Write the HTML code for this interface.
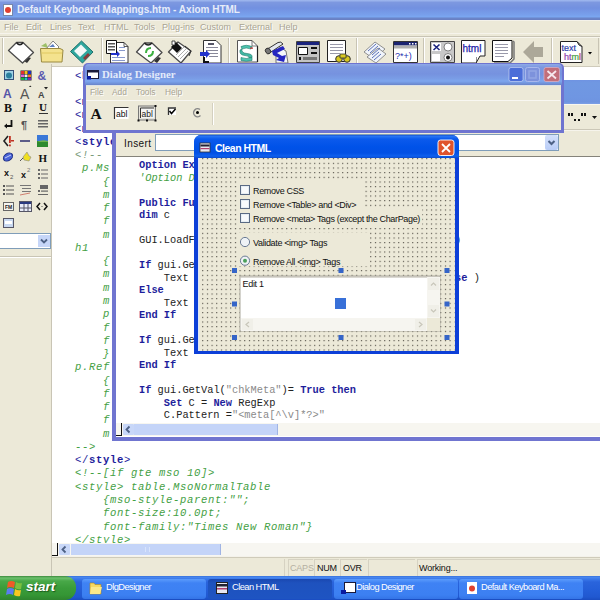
<!DOCTYPE html>
<html><head><meta charset="utf-8">
<style>
*{margin:0;padding:0;box-sizing:border-box}
html,body{width:600px;height:600px;overflow:hidden;background:#ECE9D8;font-family:"Liberation Sans",sans-serif;position:relative}
.a{position:absolute}
.mono{font-family:"Liberation Mono",monospace;white-space:pre}
.menu span{position:absolute;top:0;color:#A8A493;text-shadow:1px 1px 0 #fff}
.code div{position:absolute;left:0;height:14px;white-space:pre}
.b{color:#1E1E9C;font-weight:bold}
.t{color:#1E1E9C}
.g{color:#44A044;font-style:italic}
.gr{color:#8a8a8a}
.k{color:#222}
</style></head><body>

<!-- main title bar -->
<div class="a" style="left:0;top:0;width:600px;height:20px;background:linear-gradient(#A2BAF0 0,#7D98E0 2.5px,#7290E0 8px,#78A0EC 15px,#7AA6F0 16.5px,#6A84C8 18.5px,#6A7EC0 20px)"></div>
<div class="a" style="left:3px;top:4px;width:10px;height:12px;background:#fff;border:1px solid #7788aa"></div>
<div class="a" style="left:5px;top:7px;width:6px;height:6px;border-radius:50%;background:#E04030"></div>
<div class="a" style="left:17px;top:4px;font-size:10px;font-weight:bold;color:#E6ECF9;white-space:nowrap">Default Keyboard Mappings.htm - Axiom HTML</div>
<div class="a" style="left:0;top:20px;width:600px;height:1px;background:#F4F2EA"></div>

<!-- menu -->
<div class="a menu" style="left:0;top:22px;width:600px;height:12px;font-size:9px">
<span style="left:4px">File</span><span style="left:26px">Edit</span><span style="left:50px">Lines</span><span style="left:78px">Text</span><span style="left:104px">HTML</span><span style="left:134px">Tools</span><span style="left:162px">Plug-ins</span><span style="left:200px">Custom</span><span style="left:239px">External</span><span style="left:279px">Help</span>
</div>
<div class="a" style="left:0;top:33px;width:600px;height:1px;background:#F6F4EC"></div>
<div class="a" style="left:0;top:36px;width:600px;height:1px;background:#C8C4B4"></div>
<div class="a" style="left:0;top:37px;width:600px;height:1px;background:#F8F6EE"></div>

<!-- toolbar -->
<svg class="a" style="left:0;top:0" width="600" height="66" viewBox="0 0 600 66">
<g stroke-linejoin="round">
<!-- separators -->
<g fill="#C8C4B4"><rect x="2" y="38" width="1" height="26"/><rect x="101" y="38" width="1" height="26"/><rect x="228" y="38" width="1" height="26"/><rect x="356" y="38" width="1" height="26"/><rect x="423" y="38" width="1" height="26"/><rect x="551" y="38" width="1" height="26"/><rect x="598" y="38" width="1" height="26"/></g>
<g fill="#fff"><rect x="3" y="38" width="1" height="26"/><rect x="102" y="38" width="1" height="26"/><rect x="229" y="38" width="1" height="26"/><rect x="357" y="38" width="1" height="26"/><rect x="424" y="38" width="1" height="26"/><rect x="552" y="38" width="1" height="26"/></g>
<!-- 1 new -->
<path d="M24 61 L28 57 L31 58 L27 63Z" fill="#333"/>
<path d="M8.5 50.5 L16.5 42.5 L23 42.5 L33.5 52.5 L22.5 63 Z" fill="#fff" stroke="#4a4a4a" stroke-width="1.3"/>
<path d="M16.5 42.5 Q20 47 23 42.5" fill="none" stroke="#222" stroke-width="1.6"/>
<!-- 2 open -->
<path d="M41 46 L46 43 L48 48 Z" fill="#9DC068"/>
<path d="M46 49 L53 41 L59 47 L52 54Z" fill="#fff" stroke="#666" stroke-width="0.8"/>
<path d="M49 47 L53 44 L55 47 Z" fill="#5C7FC0"/>
<path d="M40.5 48.5 L60 48.5 L63 50 L62 62 L41.5 62 Z" fill="#F4E28E" stroke="#9A8A40" stroke-width="1"/>
<path d="M41.5 53 L62 53" stroke="#E0C860" stroke-width="1"/>
<!-- 3 save -->
<path d="M70.5 51.5 L81.5 41 L93 52 L82.5 63 Z" fill="#2FA79E" stroke="#1F6F6A" stroke-width="1"/>
<path d="M74 51 L81 44.5 L87 50.5 L80 57 Z" fill="#F4F8F8"/>
<path d="M83 58 L88 53 L90 55 L85 60Z" fill="#8A3A3A"/>
<!-- 4 pages arrow -->
<path d="M110.5 42.5 L124 42.5 L128 46.5 L128 63 L110.5 63 Z" fill="#fff" stroke="#333" stroke-width="1"/>
<path d="M124 42.5 L124 46.5 L128 46.5" fill="none" stroke="#333" stroke-width="0.8"/>
<rect x="106.5" y="40.5" width="10" height="13" fill="#fff" stroke="#111" stroke-width="1"/>
<g fill="#555"><rect x="108" y="43" width="7" height="1.5"/><rect x="108" y="46" width="7" height="1.5"/><rect x="108" y="49" width="7" height="1.5"/></g>
<g fill="#8899CC"><rect x="119" y="47" width="6" height="1"/><rect x="119" y="50" width="6" height="1"/><rect x="112" y="57" width="13" height="1"/><rect x="112" y="60" width="13" height="1"/></g>
<path d="M111 53 L117 53 L117 51 L120 54 L117 57 L117 55 L111 55Z" fill="#2233CC"/>
<!-- 5 refresh diamond -->
<path d="M154 61 L158 57 L161 58 L157 63Z" fill="#333"/>
<path d="M136.5 52 L144.5 43 L152 43 L162 52.5 L151 63 Z" fill="#fff" stroke="#4a4a4a" stroke-width="1.3"/>
<path d="M144.5 43 Q148 47 152 43" fill="none" stroke="#222" stroke-width="1.5"/>
<path d="M146 53 Q146 48 151 48" fill="none" stroke="#3CB040" stroke-width="2"/>
<path d="M153 51 Q153 56 148 56" fill="none" stroke="#3CB040" stroke-width="2"/>
<!-- 6 clip diamond -->
<path d="M168.5 52 L178 42 L191 51 L181 63 Z" fill="#fff" stroke="#4a4a4a" stroke-width="1.3"/>
<path d="M185 46 L191 51 L189 56" fill="none" stroke="#333" stroke-width="1"/>
<g stroke="#999" stroke-width="0.8"><path d="M176 55 L184 47"/><path d="M178 57 L186 49"/><path d="M180 59 L188 51"/></g>
<path d="M171 47 L176 42 L182 48 L177 53Z" fill="#111"/>
<rect x="172" y="41" width="3" height="4" fill="#fff" stroke="#222" stroke-width="0.8"/>
<!-- 7 doc arrow -->
<path d="M203.5 40.5 L216 40.5 L221 45.5 L221 63 L203.5 63 Z" fill="#fff" stroke="#333" stroke-width="1"/>
<path d="M208 43 L214 43 L214 45 L208 45Z" fill="#556"/>
<g fill="#889"><rect x="206" y="47" width="12" height="1"/><rect x="206" y="50" width="12" height="1"/><rect x="209" y="53" width="9" height="1"/><rect x="209" y="56" width="9" height="1"/></g>
<path d="M200 52 L206 52 L206 50 L210 54 L206 58 L206 56 L200 56Z" fill="#2233CC"/>
<path d="M203 57 L203 63 L209 63 L209 61 L205 61 L205 57Z" fill="#111"/>
<!-- 8 doc S -->
<path d="M237.5 40.5 L252 40.5 L257.5 46 L257.5 62 L237.5 62 Z" fill="#fff" stroke="#555" stroke-width="1"/>
<path d="M257.5 46 L257.5 62" stroke="#222" stroke-width="1.2"/>
<path d="M252 40.5 L252 46 L257.5 46" fill="none" stroke="#555" stroke-width="0.8"/>
<path d="M241 46.5 Q246 44 252 46.5 L251 49 Q246 47 242 49 Z" fill="#4EC4B0" stroke="#1E7A6A" stroke-width="0.6"/>
<path d="M242 49 Q241 53 247 53.5 Q253 54 252 57.5 L249 58 Q250 56 245 55.5 Q239 55 240 50Z" fill="#40B8A4" stroke="#1E7A6A" stroke-width="0.6"/>
<path d="M241 57.5 Q246 59.5 252 57.5 L252 60.5 Q246 62 241 60.5 Z" fill="#4EC4B0" stroke="#1E7A6A" stroke-width="0.6"/>
<rect x="250" y="47.5" width="3" height="1.2" fill="#C03030"/>
<!-- 9 scroll arrow -->
<path d="M276 45 L286 51 L288 63 L276 63Z" fill="#F4F6FA" stroke="#555" stroke-width="0.8"/>
<path d="M266 50 L278 42.5 Q281 41 283 44 L271 52 Q268 54 266 50Z" fill="#E4E8EE" stroke="#333" stroke-width="1"/>
<ellipse cx="268" cy="51" rx="2.5" ry="3" fill="#777" stroke="#222" stroke-width="0.8" transform="rotate(-35 268 51)"/>
<path d="M272 51 L283 46 L285 49 L277 53 L282 56 L286 55 L284 62 L276 60 L279 58 L273 55Z" fill="#2626C0"/>
<!-- 10 window form -->
<rect x="296.5" y="41.5" width="23" height="21" fill="#C4C4C4" stroke="#444" stroke-width="1"/>
<rect x="297" y="42" width="22" height="3" fill="#1A237E"/>
<rect x="298.5" y="47.5" width="9" height="7" fill="#fff" stroke="#111" stroke-width="1"/>
<rect x="311" y="47" width="6" height="2" fill="#111"/><rect x="311" y="52" width="6" height="2" fill="#111"/>
<rect x="299" y="57" width="2" height="3" fill="#111"/><rect x="303" y="57" width="14" height="3" fill="#777"/>
<!-- 11 doc binoculars -->
<rect x="327.5" y="40.5" width="18" height="21" fill="#fff" stroke="#222" stroke-width="1"/>
<g fill="#99A"><rect x="330" y="44" width="13" height="1"/><rect x="330" y="47" width="13" height="1"/><rect x="330" y="50" width="13" height="1"/><rect x="330" y="53" width="10" height="1"/></g>
<circle cx="339" cy="59" r="3.3" fill="#D8C820" stroke="#333" stroke-width="1"/><circle cx="347" cy="59" r="3.3" fill="#D8C820" stroke="#333" stroke-width="1"/>
<rect x="340" y="54" width="6" height="4" fill="#D8C820" stroke="#333" stroke-width="0.8"/>
<!-- 12 two sheets -->
<path d="M364 52 L375 42 L385 49 L374 59Z" fill="#F0F4FA" stroke="#777" stroke-width="0.8"/>
<path d="M367 57 L378 48 L386 54 L376 63Z" fill="#F0F4FA" stroke="#777" stroke-width="0.8"/>
<g stroke="#4B62B0" stroke-width="0.9"><path d="M368 51 L376 44"/><path d="M370 53 L378 46"/><path d="M372 55 L380 48"/><path d="M372 58 L379 52"/><path d="M374 60 L381 54"/></g>
<!-- 13 regex window -->
<rect x="393.5" y="41.5" width="24" height="21" fill="#fff" stroke="#333" stroke-width="1"/>
<rect x="394" y="42" width="23" height="3.5" fill="#1A2370"/>
<rect x="394" y="45.5" width="23" height="3" fill="#B0B0B0"/>
<g fill="#fff"><rect x="409" y="43" width="1.5" height="1.5"/><rect x="412" y="43" width="1.5" height="1.5"/><rect x="415" y="43" width="1.5" height="1.5"/></g>
<text x="395" y="59" font-family="Liberation Sans" font-size="9" fill="#2630B0">?*+)</text>
<!-- 14 checkbox radio -->
<rect x="430.5" y="41.5" width="24" height="21" fill="#C8C8C8" stroke="#444" stroke-width="1"/>
<rect x="432" y="43" width="9" height="8" fill="#fff"/>
<path d="M433.5 44.5 L439.5 50 M439.5 44.5 L433.5 50" stroke="#1A237E" stroke-width="1.6"/>
<circle cx="448" cy="47" r="4" fill="#fff" stroke="#666" stroke-width="0.8"/>
<rect x="432" y="54" width="8" height="7" fill="#fff"/>
<circle cx="448" cy="57.5" r="4" fill="#fff" stroke="#666" stroke-width="0.8"/>
<circle cx="448" cy="57.5" r="2" fill="#111"/>
<!-- 15 html page -->
<path d="M461.5 40.5 L485 40.5 L485 56 L480 56 L476 63 L476 57 L461.5 57 L461.5 63" fill="#fff" stroke="#222" stroke-width="1"/>
<rect x="462" y="56" width="14" height="7" fill="#fff"/>
<path d="M461.5 40.5 L461.5 63 L476 63" fill="none" stroke="#222" stroke-width="1"/>
<text x="462.5" y="51.5" font-family="Liberation Sans" font-size="10" fill="#1E22A8" stroke="#1E22A8" stroke-width="0.25">html</text>
<!-- 16 page lines -->
<path d="M492.5 40.5 L512 40.5 L512 58 L508 61.5 L492.5 61.5Z" fill="#fff" stroke="#111" stroke-width="1"/>
<path d="M513 41 L514 42 L514 59 L510 63 L494 63" fill="none" stroke="#777" stroke-width="1.5"/>
<g fill="#99A"><rect x="495" y="44" width="13" height="1"/><rect x="495" y="47" width="13" height="1"/><rect x="495" y="50" width="13" height="1"/><rect x="495" y="53" width="13" height="1"/><rect x="495" y="56" width="9" height="1"/></g>
<!-- 17 gray arrow -->
<path d="M523 52 L534 41 L534 47 L543 47 L543 57 L534 57 L534 63 Z" fill="#ACA899"/>
<!-- 18 text html -->
<path d="M560.5 41.5 L577 41.5 L582 46.5 L582 62.5 L560.5 62.5 Z" fill="#fff" stroke="#222" stroke-width="1"/>
<path d="M577 41.5 L579 45 L582 46.5" fill="none" stroke="#222" stroke-width="1"/>
<text x="561.5" y="50.5" font-family="Liberation Sans" font-size="9" fill="#2A3AA8" stroke="#2A3AA8" stroke-width="0.2">text</text>
<text x="564" y="60" font-family="Liberation Sans" font-size="9" fill="#9040B0" stroke="#9040B0" stroke-width="0.2">ht<tspan fill="#40A040" stroke="#40A040">m</tspan><tspan fill="#C04040" stroke="#C04040">l</tspan></text>
<path d="M588 52 L592 52 L590 54.5Z" fill="#000"/>
</g>
</svg>

<!-- left panel -->
<svg class="a" style="left:0;top:64px" width="52" height="200" viewBox="0 64 52 200">
<!-- row1 -->
<rect x="4.5" y="70.5" width="9" height="9" fill="#9FD2E6" stroke="#35507A" stroke-width="1"/>
<circle cx="9" cy="75.5" r="3" fill="#2B7F9E"/>
<rect x="20.5" y="70.5" width="11" height="10" fill="#222"/>
<g><rect x="21" y="71" width="3" height="3" fill="#E03030"/><rect x="24.5" y="71" width="3" height="3" fill="#F0C020"/><rect x="28" y="71" width="3" height="3" fill="#2030C0"/><rect x="21" y="74.5" width="3" height="2.5" fill="#E060E0"/><rect x="24.5" y="74.5" width="3" height="2.5" fill="#F0F0F0"/><rect x="28" y="74.5" width="3" height="2.5" fill="#F08020"/><rect x="21" y="77.5" width="3" height="2.5" fill="#20B040"/><rect x="24.5" y="77.5" width="3" height="2.5" fill="#20C0C0"/><rect x="28" y="77.5" width="3" height="2.5" fill="#8020C0"/></g>
<text x="37.5" y="80" font-family="Liberation Sans" font-weight="bold" font-size="12" fill="#5A5AB0">&amp;</text>
<!-- row2 -->
<text x="3" y="98" font-family="Liberation Sans" font-weight="bold" font-size="12" fill="#5555A8">A</text>
<text x="20" y="99" font-family="Liberation Sans" font-size="14" fill="#555">A</text>
<path d="M29 87 L31.5 87 L30.2 85.5Z" fill="#222"/>
<text x="38" y="98" font-family="Liberation Sans" font-weight="bold" font-size="9" fill="#444">A</text>
<path d="M44 87 L48 87 L46 89.5Z" fill="#222"/>
<!-- row3 -->
<text x="4" y="112" font-family="Liberation Serif" font-weight="bold" font-size="12" fill="#111">B</text>
<text x="22" y="112" font-family="Liberation Serif" font-weight="bold" font-style="italic" font-size="12" fill="#111">I</text>
<text x="39" y="111" font-family="Liberation Serif" font-weight="bold" font-size="11" fill="#111">U</text>
<rect x="39" y="113" width="9" height="1" fill="#333"/>
<!-- row4 -->
<path d="M11.5 120 L11.5 126 L6 126" fill="none" stroke="#111" stroke-width="1.8"/>
<path d="M4 126 L7 123.5 L7 128.5Z" fill="#111"/>
<text x="21" y="129" font-family="Liberation Sans" font-weight="bold" font-size="11" fill="#555">¶</text>
<g fill="#666"><rect x="38" y="120" width="10" height="1.5"/><rect x="38" y="123" width="10" height="1.5"/><rect x="38" y="126" width="10" height="1.5"/></g>
<!-- row5 -->
<path d="M8 136 L4 141 L8 146" fill="none" stroke="#222" stroke-width="1.6"/>
<rect x="9" y="136" width="1.8" height="7" fill="#C03020"/><rect x="9" y="144.5" width="1.8" height="1.8" fill="#C03020"/>
<rect x="11" y="140" width="3" height="1.5" fill="#C03020"/>
<rect x="20" y="140" width="10" height="2" fill="#5C5C88"/>
<rect x="37" y="135" width="11" height="12" fill="#3A78D8"/>
<rect x="37" y="141" width="11" height="6" fill="#2E8A2E"/>
<path d="M37 142 Q42 139 48 141 L48 142 L37 142Z" fill="#6CB04C"/>
<!-- row6 -->
<ellipse cx="8" cy="157" rx="5" ry="3.6" transform="rotate(-35 8 157)" fill="#4A64D8" stroke="#1A2A80" stroke-width="1"/>
<path d="M5 158 L11 155" stroke="#C8D0F8" stroke-width="1"/>
<path d="M20 161 L24 157" stroke="#555" stroke-width="1"/>
<path d="M23 157 L27 152 L29 156 L31 157 L29 161 L24 160Z" fill="#F0E020" stroke="#888" stroke-width="0.6"/>
<text x="38.5" y="161.5" font-family="Liberation Serif" font-weight="bold" font-size="11" fill="#111">H</text>
<!-- row7 -->
<text x="4" y="176" font-family="Liberation Sans" font-weight="bold" font-size="9" fill="#111">x</text>
<text x="10" y="179" font-family="Liberation Sans" font-size="6" fill="#555">2</text>
<text x="21" y="178" font-family="Liberation Sans" font-weight="bold" font-size="9" fill="#111">x</text>
<text x="27" y="172" font-family="Liberation Sans" font-size="6" fill="#777">2</text>
<g fill="#666"><rect x="38" y="169" width="2" height="2"/><rect x="38" y="173" width="2" height="2"/><rect x="38" y="177" width="2" height="2"/><rect x="41" y="169.5" width="7" height="1"/><rect x="41" y="173.5" width="7" height="1"/><rect x="41" y="177.5" width="7" height="1"/></g>
<!-- row8 -->
<g fill="#555"><rect x="3" y="185" width="2" height="2"/><rect x="3" y="189" width="2" height="2"/><rect x="3" y="193" width="2" height="2"/><rect x="6" y="185.5" width="8" height="1"/><rect x="6" y="189.5" width="8" height="1"/><rect x="6" y="193.5" width="8" height="1"/></g>
<g fill="#777"><rect x="20" y="185" width="11" height="1"/><rect x="22" y="188" width="9" height="1"/><rect x="22" y="191" width="9" height="1"/></g>
<path d="M20 195 L30 193" stroke="#D08070" stroke-width="1"/>
<g fill="#666"><rect x="40" y="185" width="8" height="4"/><rect x="38" y="190" width="2" height="2"/><rect x="41" y="190.5" width="7" height="1.2"/><rect x="38" y="194" width="10" height="1"/></g>
<!-- row9 -->
<rect x="3.5" y="202.5" width="10" height="8" fill="#F4F4F0" stroke="#666" stroke-width="1"/>
<text x="5" y="209" font-family="Liberation Sans" font-weight="bold" font-size="5" fill="#222">FM</text>
<rect x="19.5" y="201.5" width="12" height="10" fill="#E8ECF8" stroke="#556" stroke-width="1"/>
<rect x="20" y="202" width="11" height="2" fill="#2A3A80"/>
<g fill="#556"><rect x="23.5" y="204" width="1" height="7"/><rect x="27.5" y="204" width="1" height="7"/><rect x="20" y="207.5" width="11" height="1"/></g>
<path d="M40 203 L37 206.5 L40 210 M44 203 L47 206.5 L44 210" fill="none" stroke="#111" stroke-width="1.5"/>
<rect x="41.5" y="206" width="1" height="1" fill="#555"/>
<!-- row10 -->
<rect x="3.5" y="218.5" width="10" height="9" fill="#C8D8F0" stroke="#556" stroke-width="1"/>
<rect x="5" y="221" width="7" height="3" fill="#fff"/>
<!-- combobox -->
<rect x="0" y="233" width="51" height="16" fill="#7F9DB9"/>
<rect x="0" y="234" width="50" height="14" fill="#fff"/>
<rect x="38" y="235" width="12" height="12" fill="#C6D6F8"/>
<path d="M41 239.5 L44 242.5 L47 239.5" fill="none" stroke="#4D6185" stroke-width="1.8"/>
<rect x="0" y="256" width="51" height="1" fill="#C9C5B5"/>
<rect x="0" y="257" width="51" height="1" fill="#fff"/>
</svg>

<!-- left panel border -->
<div class="a" style="left:51px;top:64px;width:1px;height:512px;background:#C9C5B5"></div>

<!-- main editor -->
<div class="a" style="left:52px;top:66px;width:548px;height:1px;background:#CFCBBB"></div>
<div class="a" style="left:52px;top:67px;width:548px;height:476px;background:#fff"></div>

<div class="a mono" id="oc" style="left:75px;top:69.5px;font-size:10.6px;letter-spacing:0.64px;line-height:13.27px;color:#222"><span class="t">&lt;</span><span class="b">html</span><span class="t">&gt;</span>

<span class="t">&lt;</span><span class="b">meta</span> name=<span class="gr">"Content-Type"</span>
<span class="t">&lt;</span><span class="b">meta</span> name=<span class="gr">"ProgId"</span>
<span class="t">&lt;</span><span class="b">meta</span> name=<span class="gr">"Generator"</span>
<span class="t">&lt;</span><span class="b">style</span><span class="t">&gt;</span>
<span class="g" style="color:#7a9a7a">&lt;!--</span>
<span class="g"> p.Ms</span>
<span class="g">    {</span>
<span class="g">    m</span>
<span class="g">    f</span>
<span class="g">    f</span>
<span class="g">    m</span>
<span class="g">h1</span>
<span class="g">    {</span>
<span class="g">    m</span>
<span class="g">    m</span>
<span class="g">    m</span>
<span class="g">    p</span>
<span class="g">    f</span>
<span class="g">    f</span>
<span class="g">    }</span>
<span class="g">p.Ref</span>
<span class="g">    {</span>
<span class="g">    f</span>
<span class="g">    f</span>
<span class="g">    f</span>
<span class="g">    m</span>
<span class="g">--&gt;</span>
<span class="t">&lt;/</span><span class="b">style</span><span class="t">&gt;</span>
<span class="g">&lt;!--[if gte mso 10]&gt;</span>
<span class="g">&lt;style&gt; table.MsoNormalTable</span>
<span class="g">    {mso-style-parent:"";</span>
<span class="g">    font-size:10.0pt;</span>
<span class="g">    font-family:"Times New Roman"}</span>
<span class="g">&lt;/style&gt;</span>
</div>

<!-- main scrollbar -->
<div class="a" style="left:52px;top:543px;width:548px;height:13px;background:#F7F6F1"></div>
<div class="a" style="left:52px;top:555px;width:6px;height:1px;background:#111"></div>
<div class="a" style="left:57px;top:543px;width:1px;height:13px;background:#111"></div>
<div class="a" style="left:59px;top:544px;width:11px;height:11px;background:#C8D7F8;border-radius:1px"></div>
<svg class="a" style="left:59px;top:544px" width="11" height="11"><path d="M6.5 2.5 L3.5 5.5 L6.5 8.5" fill="none" stroke="#4D6185" stroke-width="1.8"/></svg>
<div class="a" style="left:71px;top:544px;width:150px;height:11px;background:#C4D4F8;border-right:1px solid #A0B4E4"></div>
<div class="a" style="left:145px;top:547px;width:5px;height:5px;border-left:1px solid #D8E4FC;border-right:1px solid #D8E4FC"></div>

<!-- status bar -->
<div class="a" style="left:52px;top:556px;width:548px;height:2px;background:#F4F2EA"></div>
<div class="a" style="left:52px;top:558px;width:548px;height:18px;background:#ECE9D8"></div>
<div class="a" style="left:52px;top:557px;width:548px;height:1px;background:#CFCBBA"></div>
<div class="a" style="left:284px;top:559px;width:1px;height:17px;background:#D6D2C2"></div>
<div class="a" style="left:288px;top:559px;width:25px;height:17px;border-left:1px solid #D6D2C2;border-top:1px solid #D6D2C2"></div>
<div class="a" style="left:314px;top:559px;width:25px;height:17px;border-left:1px solid #D6D2C2;border-top:1px solid #D6D2C2"></div>
<div class="a" style="left:340px;top:559px;width:27px;height:17px;border-left:1px solid #D6D2C2;border-top:1px solid #D6D2C2"></div>
<div class="a" style="left:368px;top:559px;width:47px;height:17px;border-left:1px solid #D6D2C2;border-top:1px solid #D6D2C2"></div>
<div class="a" style="left:417px;top:559px;width:183px;height:17px;border-left:1px solid #D6D2C2;border-top:1px solid #D6D2C2"></div>
<div class="a" style="left:290px;top:563px;font-size:9px;color:#B4B0A2;letter-spacing:-0.2px">CAPS</div>
<div class="a" style="left:317px;top:563px;font-size:9px;color:#111;letter-spacing:-0.2px">NUM</div>
<div class="a" style="left:343px;top:563px;font-size:9px;color:#111;letter-spacing:-0.2px">OVR</div>
<div class="a" style="left:419px;top:563px;font-size:9px;color:#111;letter-spacing:-0.2px">Working...</div>

<!-- taskbar -->
<div class="a" style="left:0;top:576px;width:600px;height:24px;background:linear-gradient(#3168D5 0,#4A8AF0 1px,#3A78EA 3px,#2A64DC 6px,#245ED8 14px,#2058D0 21px,#1A4CC0 24px)"></div>
<div class="a" style="left:0;top:576px;width:76px;height:24px;background:linear-gradient(#3C8A3C 0,#6CC06C 2px,#48A848 5px,#3A9C3A 12px,#359635 19px,#2E842E 24px);border-radius:0 11px 11px 0"></div>
<svg class="a" style="left:0;top:576px" width="80" height="24" viewBox="0 576 80 24">
<path d="M8 582 Q11 580 15 582 L14 588 Q10 586 7 588Z" fill="#F05A28"/>
<path d="M16 582 Q19 584 22 583 L21 589 Q18 590 15 588Z" fill="#7CC040"/>
<path d="M7 589 Q10 587 14 589 L13 595 Q10 593 6 595Z" fill="#5A7CF0"/>
<path d="M15 589 Q18 591 21 590 L20 596 Q17 597 14 595Z" fill="#F8C820"/>
</svg>
<div class="a" style="left:26px;top:579px;font-size:13.5px;font-weight:bold;font-style:italic;color:#fff;text-shadow:1px 1px 1px #1C5A1C">start</div>
<!-- task buttons -->
<div class="a" style="left:82px;top:579px;width:124px;height:20px;background:linear-gradient(#5C9CFC,#3F82F4 20%,#3C80F2 80%,#3474E6);border-radius:3px"></div>
<div class="a" style="left:208px;top:579px;width:124px;height:20px;background:linear-gradient(#1A48B0,#1E52BE 20%,#1E54C2);border-radius:3px"></div>
<div class="a" style="left:334px;top:579px;width:124px;height:20px;background:linear-gradient(#5C9CFC,#3F82F4 20%,#3C80F2 80%,#3474E6);border-radius:3px"></div>
<div class="a" style="left:459px;top:579px;width:124px;height:20px;background:linear-gradient(#5C9CFC,#3F82F4 20%,#3C80F2 80%,#3474E6);border-radius:3px"></div>
<svg class="a" style="left:0;top:576px" width="600" height="24" viewBox="0 576 600 24">
<!-- folder -->
<path d="M90 583 L94 583 L95 584.5 L101 584.5 L101 594 L90 594Z" fill="#F8D860" stroke="#B08820" stroke-width="0.6"/>
<path d="M91 587 L102 587 L100 594 L90 594Z" fill="#FCE88A"/>
<!-- clean html icon -->
<rect x="216.5" y="582.5" width="11" height="11" fill="#E8E8F0" stroke="#222" stroke-width="1"/>
<rect x="217" y="584" width="10" height="2.5" fill="#223"/>
<rect x="217" y="588" width="10" height="1.5" fill="#B04070"/>
<!-- dialog designer icon -->
<rect x="344.5" y="582.5" width="11" height="10" fill="#fff" stroke="#1A1A3A" stroke-width="1"/>
<rect x="341" y="590" width="5" height="4" fill="#0A1AA0"/>
<!-- axiom icon -->
<rect x="467" y="582" width="10" height="12" fill="#fff"/>
<circle cx="472" cy="588.5" r="3" fill="#E04030"/>
</svg>
<div class="a" style="left:106px;top:582px;font-size:9.3px;color:#fff;letter-spacing:-0.55px;white-space:nowrap">DlgDesigner</div>
<div class="a" style="left:232px;top:582px;font-size:9.3px;color:#fff;letter-spacing:-0.55px;white-space:nowrap">Clean HTML</div>
<div class="a" style="left:356px;top:582px;font-size:9.3px;color:#fff;letter-spacing:-0.55px;white-space:nowrap">Dialog Designer</div>
<div class="a" style="left:481px;top:582px;font-size:9.3px;color:#fff;letter-spacing:-0.55px;white-space:nowrap">Default Keyboard Ma...</div>

<!-- code window -->
<div class="a" style="left:112px;top:80px;width:500px;height:361px;background:#7075D0"></div>
<div class="a" style="left:116px;top:80px;width:484px;height:24px;background:linear-gradient(#6F93E2 0,#7098E2 3px,#6F96E2 18px,#6E94E0 22px,#7DA0E6 24px)"></div>
<div class="a" style="left:116px;top:104px;width:484px;height:26px;background:#ECE9D8;border-top:1px solid #F8F6EE"></div>
<div class="a" style="left:116px;top:129px;width:484px;height:1px;background:#CBC7B7"></div>
<div class="a" style="left:116px;top:130px;width:484px;height:27px;background:#ECE9D8;border-top:1px solid #F6F4EC"></div>
<div class="a" style="left:116px;top:156px;width:484px;height:1px;background:#85837A"></div>
<div class="a" style="left:116px;top:157px;width:484px;height:267px;background:#fff"></div>
<svg class="a" style="left:560px;top:104px" width="40" height="26" viewBox="560 104 40 26">
<g fill="#111"><rect x="568" y="113" width="2" height="3"/><rect x="571" y="113" width="2" height="3"/><rect x="581" y="113" width="2" height="3"/><rect x="584" y="113" width="2" height="3"/><rect x="574" y="119" width="2" height="2"/><rect x="578" y="119" width="2" height="2"/></g>
<path d="M592 116 L597 116 L594.5 119Z" fill="#111"/>
</svg>
<div class="a" style="left:124px;top:138px;font-size:10px;letter-spacing:0.4px;color:#111">Insert</div>
<div class="a" style="left:155px;top:134px;width:404px;height:17px;background:#fff;border:1px solid #7F9DB9"></div>
<div class="a" style="left:545px;top:135px;width:13px;height:15px;background:linear-gradient(#D4E0FB,#B9CDF7);border-radius:2px"></div>
<svg class="a" style="left:545px;top:135px" width="13" height="15"><path d="M3.5 6 L6.5 9 L9.5 6" fill="none" stroke="#4D6185" stroke-width="2"/></svg>
<!-- inner scrollbar -->
<div class="a" style="left:116px;top:423px;width:484px;height:14px;background:#F7F6F0"></div>
<div class="a" style="left:116px;top:435px;width:6px;height:1px;background:#111"></div>
<div class="a" style="left:121px;top:423px;width:1px;height:13px;background:#111"></div>
<div class="a" style="left:123px;top:424px;width:11px;height:11px;background:#C8D7F8;border-radius:1px"></div>
<svg class="a" style="left:123px;top:424px" width="11" height="11"><path d="M6.5 2.5 L3.5 5.5 L6.5 8.5" fill="none" stroke="#4D6185" stroke-width="1.8"/></svg>
<div class="a" style="left:134px;top:424px;width:144px;height:11px;background:#C4D4F8;border-right:1px solid #A0B4E4"></div>
<div class="a" style="left:116px;top:436px;width:484px;height:1px;background:#fff"></div>

<div class="a mono" id="ic" style="left:139px;top:159px;font-size:10.33px;line-height:12.5px;color:#222"><span class="b">Option Explicit</span>
<span class="g">'Option Declarations</span>

<span class="b">Public Function</span> CleanHTML(Text)
<span class="b">dim</span> c

GUI.LoadForm(Axiom.AppPath &amp; <span class="gr">"Dialog\CleanHTML.dlg"</span>)

<span class="b">If</span> gui.GetVal(<span class="gr">"chkCSS"</span>)= <span class="b">True then</span>
    Text = RemoveTags(Text, <span class="gr">"style"</span>, <span class="gr">"classid"</span>, <span class="b">False</span> )
<span class="b">Else</span>
    Text
<span class="b">End If</span>

<span class="b">If</span> gui.GetVal(<span class="gr">"chkTable"</span>)= <span class="b">True then</span>
    Text
<span class="b">End If</span>

<span class="b">If</span> gui.GetVal(<span class="gr">"chkMeta"</span>)= <span class="b">True then</span>
    <span class="b">Set</span> C = <span class="b">New</span> RegExp
    C.Pattern =<span class="gr">"&lt;meta[^\v]*?&gt;"</span>
</div>

<!-- dialog designer -->
<div class="a" style="left:83px;top:63px;width:481px;height:70px;background:#6E74D0;border-radius:5px 5px 0 0"></div>
<div class="a" style="left:85px;top:64px;width:477px;height:21px;background:linear-gradient(#8FAAE8 0,#7C98E0 3px,#7692DF 10px,#7A9EE6 15px,#7EA6EE 17px,#7296DE 19px,#6A84C8 21px);border-radius:4px 4px 0 0"></div>
<div class="a" style="left:86px;top:85px;width:475px;height:45px;background:#ECE9D8"></div>
<div class="a" style="left:86px;top:85px;width:475px;height:1px;background:#DCE2E6"></div>
<div class="a" style="left:86px;top:100px;width:474px;height:1px;background:#F8F7F2"></div>
<div class="a" style="left:102px;top:68px;font-family:'Liberation Serif',serif;font-weight:bold;font-size:10.8px;color:#E2EAFA;white-space:nowrap">Dialog Designer</div>
<div class="a menu" style="left:0;top:86.5px;width:300px;height:12px;font-size:8.4px">
<span style="left:90px">File</span><span style="left:112px">Add</span><span style="left:136px">Tools</span><span style="left:165px">Help</span>
</div>
<svg class="a" style="left:83px;top:63px" width="480" height="70" viewBox="83 63 480 70">
<!-- title icon -->
<rect x="87.5" y="70.5" width="11" height="8" fill="#fff" stroke="#1A1A3A" stroke-width="1"/>
<rect x="88" y="71" width="10" height="1.5" fill="#1A1A3A"/>
<rect x="87" y="76" width="4" height="3.5" fill="#0A1AA0"/>
<!-- buttons -->
<rect x="509" y="67.5" width="14" height="14" rx="2" fill="#4C6ED8" stroke="#E8EEFB" stroke-opacity="0.5" stroke-width="1"/>
<rect x="512" y="77" width="6" height="2" fill="#fff"/>
<rect x="525.5" y="67.5" width="14" height="14" rx="2" fill="#7D92DC" stroke="#A8B8EC" stroke-width="1"/>
<rect x="529" y="71" width="7" height="7" fill="none" stroke="#93A6E4" stroke-width="1.5"/>
<rect x="544" y="67.5" width="15.5" height="14" rx="2" fill="#C26E7A" stroke="#E0B0C0" stroke-opacity="0.7" stroke-width="1"/>
<path d="M547.5 71 L556 78.5 M556 71 L547.5 78.5" stroke="#F6E8EE" stroke-width="1.8"/>
<!-- toolbar -->
<text x="90.5" y="118.5" font-family="Liberation Serif" font-weight="bold" font-size="15.5" fill="#111">A</text>
<rect x="114" y="107" width="14.5" height="12" fill="#fff"/>
<path d="M114.5 119 L114.5 107.5 L128.5 107.5" fill="none" stroke="#333" stroke-width="1.2"/>
<text x="116" y="116.5" font-family="Liberation Sans" font-size="8.6" fill="#111">abl</text>
<rect x="138.5" y="106" width="17" height="14" fill="#E4E2DA" stroke="#777" stroke-width="1"/>
<rect x="140" y="108" width="14" height="10" fill="#F4F4F4"/>
<path d="M140.5 118 L140.5 108 L154 108" fill="none" stroke="#333" stroke-width="1"/>
<text x="141.5" y="116.5" font-family="Liberation Sans" font-size="8.5" fill="#222">abl</text>
<g fill="#111"><rect x="137.5" y="119.5" width="2" height="2"/><rect x="154.5" y="119.5" width="2" height="2"/><rect x="154.5" y="105" width="2" height="2"/><rect x="146" y="119.5" width="2" height="2"/></g>
<rect x="168" y="107.5" width="8" height="7.5" fill="#fff"/>
<path d="M168.5 115 L168.5 108 L176 108" fill="none" stroke="#333" stroke-width="1.3"/>
<path d="M169.5 111 L171.5 113.5 L175.5 109" fill="none" stroke="#000" stroke-width="1.5"/>
<path d="M200 109.5 A4 4 0 1 0 200.5 115.5" fill="none" stroke="#888" stroke-width="1.4"/>
<circle cx="197.5" cy="112.5" r="1.5" fill="#000"/>
<rect x="212" y="103" width="1" height="22" fill="#D4D0C0"/>
<rect x="213" y="103" width="1" height="22" fill="#fff"/>
</svg>

<!-- clean html -->
<div class="a" style="left:194px;top:135px;width:265px;height:219px;background:#0C3FD8;border-radius:7px 7px 0 0"></div>
<div class="a" style="left:194px;top:135px;width:265px;height:23px;background:linear-gradient(#1248C8 0,#2C78F4 1px,#0C5AEC 4px,#0052E8 12px,#0250E4 18px,#0E60EE 21px,#0A4ACC 23px);border-radius:7px 7px 0 0"></div>
<div class="a" style="left:215px;top:141.5px;font-size:10.5px;font-weight:bold;color:#fff;letter-spacing:-0.5px;white-space:nowrap">Clean HTML</div>
<svg class="a" style="left:195px;top:135px" width="264" height="219" viewBox="195 135 264 219">
<defs>
<pattern id="dots" x="202.2" y="162.8" width="4.667" height="4.667" patternUnits="userSpaceOnUse">
<rect x="0" y="0" width="1.1" height="1.1" fill="#45423A"/>
</pattern>
</defs>
<!-- title icon -->
<rect x="200" y="143" width="10" height="9" fill="#E8E8F0" stroke="#333" stroke-width="0.8"/>
<rect x="200.5" y="144.5" width="9" height="2" fill="#223"/>
<rect x="200.5" y="148" width="9" height="1.2" fill="#B04070"/>
<!-- close button -->
<rect x="438" y="140" width="16" height="15.5" rx="2.5" fill="#E0532C" stroke="#fff" stroke-width="0.9"/>
<path d="M442 144 L450 152 M450 144 L442 152" stroke="#fff" stroke-width="1.8"/>
<!-- client -->
<rect x="198" y="158" width="257" height="193" fill="#ECE9D8"/>
<rect x="198" y="158" width="1" height="193" fill="#DCE6FA"/>
<rect x="200" y="158" width="255" height="193" fill="url(#dots)"/>
<rect x="451" y="158" width="4" height="193" fill="#ECE9D8" opacity="0.6"/>
<!-- non-dot control areas -->
<rect x="239" y="180" width="125" height="30" fill="#ECE9D8"/>
<rect x="239" y="209" width="183" height="17" fill="#ECE9D8"/>
<rect x="239" y="233" width="130" height="33" fill="#ECE9D8"/>
<!-- checkboxes -->
<g stroke="#5A6A84" stroke-width="1" fill="#E6EEF4">
<rect x="240.5" y="185.5" width="9" height="9"/>
<rect x="240.5" y="199.5" width="9" height="9"/>
<rect x="240.5" y="213.5" width="9" height="9"/>
</g>
<g fill="#F8FAFC"><rect x="242" y="187" width="6" height="6"/><rect x="242" y="201" width="6" height="6"/><rect x="242" y="215" width="6" height="6"/></g>
<g font-family="Liberation Sans" font-size="9" fill="#111" letter-spacing="-0.35">
<text x="253" y="194">Remove CSS</text>
<text x="253" y="208">Remove &lt;Table&gt; and &lt;Div&gt;</text>
<text x="253" y="222">Remove &lt;meta&gt; Tags (except the CharPage)</text>
<text x="253" y="246">Validate &lt;img&gt; Tags</text>
<text x="253" y="265">Remove All &lt;img&gt; Tags</text>
</g>
<circle cx="245" cy="242" r="4.6" fill="#EEF2F6" stroke="#6A7A94" stroke-width="1"/>
<circle cx="245" cy="260.7" r="4.6" fill="#EEF2F6" stroke="#6A7A94" stroke-width="1"/>
<circle cx="245" cy="260.7" r="2" fill="#4AA05A"/>
<!-- edit box -->
<rect x="240" y="276" width="200" height="55" fill="#fff" stroke="#A9A79C" stroke-width="1"/>
<rect x="240.5" y="276.5" width="199" height="1" fill="#B8B4A8"/>
<text x="242.5" y="287" font-family="Liberation Sans" font-size="9" fill="#111" letter-spacing="-0.3">Edit 1</text>
<rect x="427" y="277" width="13" height="41" fill="#F6F5F0"/>
<rect x="428" y="278" width="11" height="12" fill="#F0EFE8"/>
<path d="M431 285.5 L433.5 283 L436 285.5" fill="none" stroke="#C8C6BA" stroke-width="1.2"/>
<rect x="428" y="305" width="11" height="12" fill="#F0EFE8"/>
<path d="M431 309.5 L433.5 312 L436 309.5" fill="none" stroke="#C8C6BA" stroke-width="1.2"/>
<rect x="241" y="318" width="186" height="13" fill="#F6F5F0"/>
<rect x="242" y="319" width="11" height="11" fill="#F0EFE8"/>
<path d="M249 322 L246 324.5 L249 327" fill="none" stroke="#C8C6BA" stroke-width="1.2"/>
<rect x="415" y="319" width="11" height="11" fill="#F0EFE8"/>
<path d="M419 322 L422 324.5 L419 327" fill="none" stroke="#C8C6BA" stroke-width="1.2"/>
<rect x="427" y="318" width="13" height="13" fill="#ECE9D8"/>
<!-- handles -->
<g fill="#3565C8">
<rect x="232" y="268" width="5" height="5"/><rect x="338.5" y="268" width="5" height="5"/><rect x="444.5" y="268" width="5" height="5"/>
<rect x="232" y="301.5" width="5" height="5"/><rect x="444.5" y="301.5" width="5" height="5"/>
<rect x="232" y="335" width="5" height="5"/><rect x="338.5" y="335" width="5" height="5"/><rect x="444.5" y="335" width="5" height="5"/>
<rect x="335" y="298" width="11" height="11" fill="#3870D8"/>
</g>
</svg>

</body></html>
